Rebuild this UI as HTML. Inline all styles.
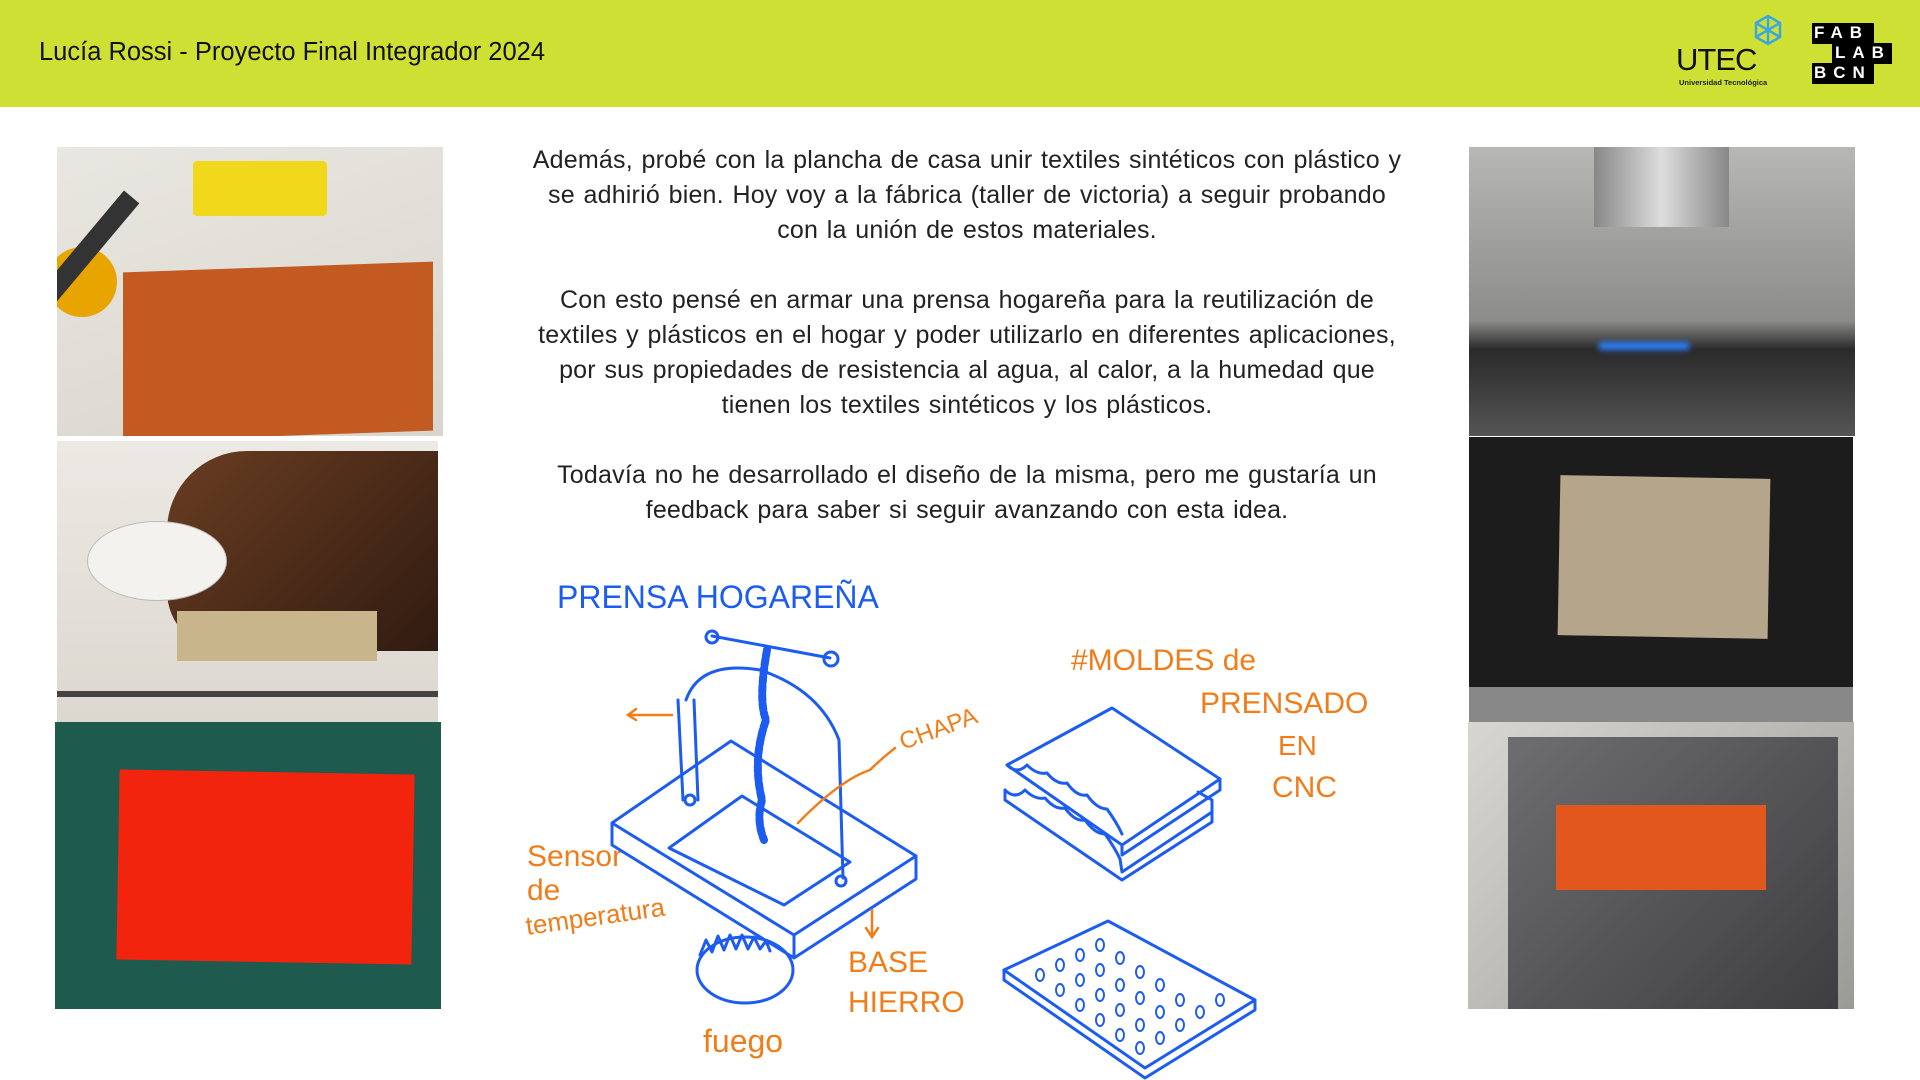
<!DOCTYPE html>
<html><head><meta charset="utf-8"><style>
*{margin:0;padding:0;box-sizing:border-box}
body{width:1920px;height:1080px;background:#fff;position:relative;overflow:hidden;font-family:"Liberation Sans",sans-serif}
.hdr{position:absolute;left:0;top:0;width:1920px;height:107px;background:#cfe034}
.title{position:absolute;left:39px;top:38px;font-size:25.5px;color:#111}
.p{position:absolute;overflow:hidden}
.txt{position:absolute;left:524px;top:143px;width:886px;text-align:center;font-size:25px;line-height:35px;color:#222;word-spacing:1.5px;letter-spacing:0.2px}
.txt p{margin-bottom:35px}
</style></head><body>
<div class="hdr"></div>
<div class="title">Lucía Rossi - Proyecto Final Integrador 2024</div>
<div style="position:absolute;left:1676px;top:42px;font-size:31px;letter-spacing:-1px;color:#111">UTEC</div>
<div style="position:absolute;left:1679px;top:78px;font-size:7.5px;font-weight:bold;color:#222">Universidad Tecnológica</div>
<svg style="position:absolute;left:1752px;top:14px" width="32" height="32" viewBox="0 0 32 32"><g fill="none" stroke="#3aa8e0" stroke-width="2.5"><polygon points="16,2 28,9 28,23 16,30 4,23 4,9"/><line x1="16" y1="2" x2="16" y2="30"/><line x1="4" y1="9" x2="28" y2="23"/><line x1="28" y1="9" x2="4" y2="23"/></g></svg>
<div style="position:absolute;left:1812px;top:23px;width:62px;height:21px;background:#000"></div>
<div style="position:absolute;left:1832px;top:43px;width:60px;height:21px;background:#000"></div>
<div style="position:absolute;left:1812px;top:63px;width:62px;height:21px;background:#000"></div>
<div style="position:absolute;left:1814px;top:23px;color:#fff;font-weight:bold;font-size:17px;letter-spacing:7px">FAB</div>
<div style="position:absolute;left:1835px;top:43px;color:#fff;font-weight:bold;font-size:17px;letter-spacing:7px">LAB</div>
<div style="position:absolute;left:1814px;top:63px;color:#fff;font-weight:bold;font-size:17px;letter-spacing:7px">BCN</div>

<div class="p" style="left:57px;top:147px;width:386px;height:289px;background:linear-gradient(160deg,#e9e7e1,#d8d5cd)">
 <div style="position:absolute;left:136px;top:14px;width:134px;height:55px;background:#f2d81a;border-radius:4px"></div>
 <div style="position:absolute;left:66px;top:120px;width:310px;height:169px;background:#c25a22;transform:skewY(-2deg)"></div>
 <div style="position:absolute;left:-10px;top:100px;width:70px;height:70px;border-radius:50%;background:#e8a500"></div>
 <div style="position:absolute;left:10px;top:30px;width:20px;height:170px;background:#333;transform:rotate(40deg)"></div>
</div>
<div class="p" style="left:57px;top:441px;width:381px;height:281px;background:linear-gradient(180deg,#ece9e4,#dcd8d0)">
 <div style="position:absolute;left:110px;top:10px;width:290px;height:200px;border-radius:80px 0 0 60px;background:linear-gradient(135deg,#6a3d22,#2e1a10)"></div>
 <div style="position:absolute;left:30px;top:80px;width:140px;height:80px;border-radius:50%;background:#f4f2ee;border:1px solid #bbb"></div>
 <div style="position:absolute;left:120px;top:170px;width:200px;height:50px;background:#c9b58c"></div>
 <div style="position:absolute;left:0;top:250px;width:381px;height:6px;background:#444"></div>
</div>
<div class="p" style="left:55px;top:722px;width:386px;height:287px;background:#1f5a4f">
 <div style="position:absolute;left:63px;top:50px;width:295px;height:190px;background:#f2240e;transform:rotate(1deg)"></div>
</div>

<div class="p" style="left:1469px;top:147px;width:386px;height:289px;background:linear-gradient(180deg,#b7b7b5,#8c8c8a 60%,#2a2a2a 70%,#555)">
 <div style="position:absolute;left:125px;top:0;width:135px;height:80px;background:linear-gradient(90deg,#888,#ddd,#888)"></div>
 <div style="position:absolute;left:130px;top:195px;width:90px;height:8px;background:#2a7fff;filter:blur(3px)"></div>
</div>
<div class="p" style="left:1469px;top:437px;width:384px;height:285px;background:#1c1c1c">
 <div style="position:absolute;left:90px;top:40px;width:210px;height:160px;background:#b5a58a;transform:rotate(1deg)"></div>
 <div style="position:absolute;left:0;top:250px;width:384px;height:35px;background:#888"></div>
</div>
<div class="p" style="left:1468px;top:722px;width:386px;height:287px;background:linear-gradient(135deg,#d8d6d0,#9a9a96)">
 <div style="position:absolute;left:40px;top:15px;width:330px;height:272px;background:linear-gradient(135deg,#6e6e70,#3e3e40)"></div>
 <div style="position:absolute;left:88px;top:83px;width:210px;height:85px;background:#e2581c"></div>
</div>

<div class="txt">
<p>Además, probé con la plancha de casa unir textiles sintéticos con plástico y se adhirió bien. Hoy voy a la fábrica (taller de victoria) a seguir probando con la unión de estos materiales.</p>
<p>Con esto pensé en armar una prensa hogareña para la reutilización de textiles y plásticos en el hogar y poder utilizarlo en diferentes aplicaciones, por sus propiedades de resistencia al agua, al calor, a la humedad que tienen los textiles sintéticos y los plásticos.</p>
<p>Todavía no he desarrollado el diseño de la misma, pero me gustaría un feedback para saber si seguir avanzando con esta idea.</p>
</div>

<svg style="position:absolute;left:0;top:0" width="1920" height="1080" viewBox="0 0 1920 1080">
<g font-family="Liberation Sans Narrow, Liberation Sans, sans-serif">
<text x="557" y="608" font-size="32" fill="#1d5cf0">PRENSA  HOGAREÑA</text>
<text x="1071" y="670" font-size="30" fill="#f07d1a">#MOLDES de</text>
<text x="1200" y="713" font-size="30" fill="#f07d1a">PRENSADO</text>
<text x="1278" y="755" font-size="28" fill="#f07d1a">EN</text>
<text x="1272" y="797" font-size="30" fill="#f07d1a">CNC</text>
<text x="903" y="750" font-size="24" fill="#f07d1a" transform="rotate(-20 903 750)">CHAPA</text>
<text x="527" y="866" font-size="30" fill="#f07d1a">Sensor</text>
<text x="527" y="900" font-size="30" fill="#f07d1a">de</text>
<text x="527" y="935" font-size="26" fill="#f07d1a" transform="rotate(-8 527 935)">temperatura</text>
<text x="848" y="972" font-size="30" fill="#f07d1a">BASE</text>
<text x="848" y="1012" font-size="30" fill="#f07d1a">HIERRO</text>
<text x="703" y="1052" font-size="32" fill="#f07d1a">fuego</text>
</g>
<g fill="none" stroke="#1d5cf0" stroke-width="3" stroke-linejoin="round" stroke-linecap="round">
<polygon points="612,823 731,741 916,856 794,935"/>
<path d="M612,823 L612,845 L794,958 L916,879 L916,856 M794,935 L794,958"/>
<polygon points="669,848 742,796 850,862 784,905"/>
<path d="M686,700 Q700,660 760,670 Q820,690 839,740 L843,878"/>
<path d="M678,700 L683,800 M694,700 L698,800"/>
<circle cx="690" cy="800" r="5"/><circle cx="841" cy="881" r="5"/>
<path d="M712,636 L830,658"/><circle cx="712" cy="637" r="6"/><circle cx="831" cy="659" r="7"/>
<path d="M767,650 Q758,700 766,720 Q752,760 762,800 Q756,820 764,840" stroke-width="8" stroke-dasharray="6 3"/>
<ellipse cx="745" cy="970" rx="48" ry="33"/>
<path d="M700,955 l6,-15 l6,12 l6,-16 l6,14 l6,-15 l6,14 l6,-14 l6,14 l6,-12 l6,12 l6,-8 l4,10"/>
<polygon points="1007,765 1112,708 1220,779 1122,845"/>
<path d="M1122,845 L1122,855 L1220,790 L1220,779"/>
<path d="M1007,765 q10,10 20,0 q10,10 20,8 q10,12 20,10 q10,14 20,12 q10,14 20,14 q10,14 15,25"/>
<path d="M1005,790 q10,10 20,0 q10,10 20,8 q10,12 20,10 q10,14 20,12 q10,14 20,14 q10,14 15,25 L1122,872 L1212,812 L1212,800 L1198,792"/>
<path d="M1005,790 L1005,800 L1122,880 L1212,822 L1212,812"/>
<polygon points="1004,970 1108,921 1255,1000 1145,1068"/>
<path d="M1004,970 L1004,980 L1145,1078 L1255,1010 L1255,1000"/>
</g>
<g fill="none" stroke="#1d5cf0" stroke-width="2">
<ellipse cx="1040" cy="975" rx="4" ry="6"/><ellipse cx="1060" cy="965" rx="4" ry="6"/><ellipse cx="1080" cy="955" rx="4" ry="6"/><ellipse cx="1100" cy="945" rx="4" ry="6"/>
<ellipse cx="1060" cy="990" rx="4" ry="6"/><ellipse cx="1080" cy="980" rx="4" ry="6"/><ellipse cx="1100" cy="970" rx="4" ry="6"/><ellipse cx="1120" cy="958" rx="4" ry="6"/>
<ellipse cx="1080" cy="1005" rx="4" ry="6"/><ellipse cx="1100" cy="995" rx="4" ry="6"/><ellipse cx="1120" cy="985" rx="4" ry="6"/><ellipse cx="1140" cy="972" rx="4" ry="6"/>
<ellipse cx="1100" cy="1020" rx="4" ry="6"/><ellipse cx="1120" cy="1010" rx="4" ry="6"/><ellipse cx="1140" cy="998" rx="4" ry="6"/><ellipse cx="1160" cy="985" rx="4" ry="6"/>
<ellipse cx="1120" cy="1035" rx="4" ry="6"/><ellipse cx="1140" cy="1025" rx="4" ry="6"/><ellipse cx="1160" cy="1012" rx="4" ry="6"/><ellipse cx="1180" cy="1000" rx="4" ry="6"/>
<ellipse cx="1140" cy="1048" rx="4" ry="6"/><ellipse cx="1160" cy="1038" rx="4" ry="6"/><ellipse cx="1180" cy="1025" rx="4" ry="6"/><ellipse cx="1200" cy="1012" rx="4" ry="6"/><ellipse cx="1220" cy="1000" rx="4" ry="6"/>
</g>
<g fill="none" stroke="#f07d1a" stroke-width="2.5" stroke-linecap="round">
<path d="M672,715 L630,715 M636,709 L628,715 L636,720"/>
<path d="M798,823 Q840,780 870,770 Q880,760 895,748"/>
<path d="M872,910 L872,935 M866,928 L872,937 L878,928"/>
</g>
</svg>
</body></html>
